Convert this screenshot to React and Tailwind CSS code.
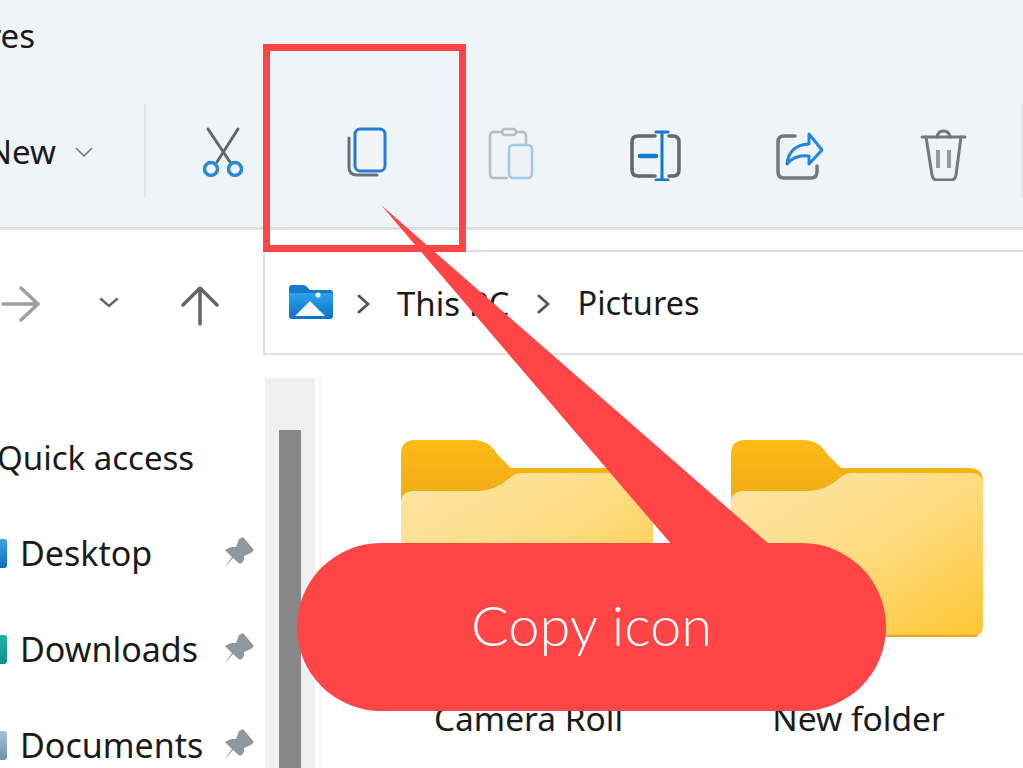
const Icon = ({ children }) => (
  <svg viewBox="0 0 56 56" fill="none" strokeLinecap="round" strokeLinejoin="round" className="w-[56px] h-[56px]">
    {children}
  </svg>
);

const ToolButton = ({ children }) => (
  <div className="w-[144px] flex items-center justify-center">
    <Icon>{children}</Icon>
  </div>
);

const PinIcon = () => (
  <svg viewBox="0 0 32 32" className="w-[32px] h-[32px]">
    <path d="M1 31 L9 20 L2 13 Q8 9 13 10 L16 2 L20 0 L31 13 L28 16 L21 19 Q22 24 17 27 L10 21 Z" fill="#8f98a0" />
  </svg>
);

const SidebarRow = ({ label, iconClass }) => (
  <div className="h-[96px] flex items-center">
    <div className={`w-[7px] h-[29px] rounded-r-[3px] ${iconClass}`} />
    <span className="ml-[13px] w-[203px] text-[34px] text-[#1a1a1a] leading-none">{label}</span>
    <PinIcon />
  </div>
);

const FolderIcon = ({ id }) => (
  <svg viewBox="0 0 252 197" className="w-[252px] h-[197px]">
    <defs>
      <linearGradient id={id} x1="0" y1="0" x2="1" y2="1">
        <stop offset="0" stopColor="#fde5a6" />
        <stop offset="0.5" stopColor="#fddc82" />
        <stop offset="1" stopColor="#fdc630" />
      </linearGradient>
      <linearGradient id={`${id}Tab`} x1="0" y1="0" x2="0" y2="1">
        <stop offset="0" stopColor="#fcbb18" />
        <stop offset="1" stopColor="#eda714" />
      </linearGradient>
    </defs>
    <path
      d="M0 70 V14 Q0 0 14 0 H72 Q88 0 96 14 L110 28 H238 Q252 28 252 42 V80 H0 Z"
      fill={`url(#${id}Tab)`}
    />
    <path
      d="M0 62 Q0 52 12 51 H78 Q94 51 110 37 Q114 33 122 33 H240 Q252 33 252 45 V185 Q252 197 240 197 H12 Q0 197 0 185 Z"
      fill={`url(#${id})`}
    />
    <path d="M6 196 H246" stroke="#eaa61c" strokeWidth="2.5" />
  </svg>
);

const FolderTile = ({ id, label }) => (
  <div className="w-[252px] flex flex-col items-center">
    <FolderIcon id={id} />
    <span className="mt-[60px] ml-[3px] text-[33.5px] leading-[42px] text-[#1a1a1a] whitespace-nowrap">{label}</span>
  </div>
);

export default function App() {
  return (
    <div className="relative w-[1023px] h-[768px] overflow-hidden bg-white font-['Noto_Sans',sans-serif]">
      {/* ribbon */}
      <div className="h-[230px] bg-[#eff4f9] border-b-[3px] border-[#dde1e5]">
        <div className="h-[71px] flex items-center">
          <span className="-ml-[89px] text-[33px] leading-none text-[#1a1a1a]">Pictures</span>
        </div>
        <div className="h-[156px] pt-[8px] flex items-center">
          <div className="w-[144px] flex items-center -mt-[3px]">
            <span className="-ml-[13px] text-[33px] leading-none text-[#1a1a1a]">New</span>
            <svg viewBox="0 0 18 10" fill="none" className="ml-[19px] w-[18px] h-[10px]">
              <path d="M1 1 L9 9 L17 1" stroke="#777" strokeWidth="1.6" />
            </svg>
          </div>
          <div className="w-[2px] h-[93px] bg-[#e1e5e9] mr-[5px] -mt-[5px]" />
          <ToolButton>
            <path d="M13 4 L35 37" stroke="#666" strokeWidth="3" />
            <path d="M43 4 L22 37" stroke="#666" strokeWidth="3" />
            <circle cx="16" cy="44" r="6.5" stroke="#2b88d8" strokeWidth="3.5" />
            <circle cx="40" cy="44" r="6.5" stroke="#2b88d8" strokeWidth="3.5" />
          </ToolButton>
          <ToolButton>
            <path d="M10 13 V42 Q10 50 18 50 H38" stroke="#6e6e6e" strokeWidth="3" />
            <rect x="16" y="4" width="30" height="42" rx="5" fill="#f3f4f7" stroke="#1f7fd6" strokeWidth="3" />
          </ToolButton>
          <ToolButton>
            <path d="M19 7 H11 Q7 7 7 11 V49 Q7 53 11 53 H24" stroke="#bcbcbc" strokeWidth="2.5" />
            <path d="M33 7 H39 Q43 7 43 11 V18" stroke="#bcbcbc" strokeWidth="2.5" />
            <rect x="19" y="4" width="14" height="6" rx="3" stroke="#bcbcbc" strokeWidth="2.5" />
            <rect x="26" y="20" width="23" height="33" rx="4" fill="#f0f1f5" stroke="#9cc8ee" strokeWidth="2.5" />
          </ToolButton>
          <ToolButton>
            <path d="M28 11 H11 Q5 11 5 17 V45 Q5 51 11 51 H28" stroke="#666" strokeWidth="3.5" />
            <path d="M42 11 H46 Q52 11 52 17 V45 Q52 51 46 51 H42" stroke="#666" strokeWidth="3.5" />
            <path d="M35 7 V55 M29 7 H41 M29 55 H41" stroke="#0f78d4" strokeWidth="3" />
            <path d="M13 31 H29" stroke="#0f78d4" strokeWidth="4.5" />
          </ToolButton>
          <ToolButton>
            <path d="M24 11 H13 Q7 11 7 17 V47 Q7 53 13 53 H40 Q46 53 46 47 V41" stroke="#777" strokeWidth="3.5" />
            <path d="M38 9 L51 25 L38 39 V31 Q24 29 16 39 Q18 20 38 19 Z" stroke="#1f87e0" strokeWidth="3" />
          </ToolButton>
          <ToolButton>
            <path d="M7 12 H50" stroke="#777" strokeWidth="3" />
            <path d="M22 12 Q23 6 28.5 6 Q34 6 35 12" stroke="#777" strokeWidth="3" />
            <path d="M11 12 L17 50 Q18 55 22 55 H36 Q40 55 41 50 L46 12" stroke="#777" strokeWidth="3" />
            <path d="M23 25 V43 M34 25 V43" stroke="#999" strokeWidth="4" strokeLinecap="butt" />
          </ToolButton>
          <div className="ml-[6px] w-[2px] h-[93px] bg-[#e1e5e9] -mt-[5px]" />
        </div>
      </div>

      {/* nav + address bar */}
      <div className="h-[148px] pt-[20px]">
        <div className="h-[105px] flex">
          <div className="w-[263px] flex items-center">
            <svg viewBox="0 0 40 36" fill="none" strokeLinecap="round" strokeLinejoin="round" className="w-[40px] h-[36px] mt-[2px]">
              <path d="M3 18 H38 M21 2 L38 18 L21 34" stroke="#9e9e9e" strokeWidth="3.5" />
            </svg>
            <svg viewBox="0 0 20 11" fill="none" strokeLinecap="round" className="ml-[59px] w-[20px] h-[11px]">
              <path d="M2 2 L10 9 L18 2" stroke="#666" strokeWidth="2.4" />
            </svg>
            <svg viewBox="0 0 40 40" fill="none" strokeLinecap="round" strokeLinejoin="round" className="ml-[61px] w-[40px] h-[40px] mt-[6px]">
              <path d="M20 38 V2 M3 19 L20 2 L37 19" stroke="#666" strokeWidth="3.5" />
            </svg>
          </div>
          <div className="flex-1 flex items-center border-y-2 border-l-2 border-[#e0e0e0] pl-[24px]">
            <svg viewBox="0 0 44 34" className="w-[44px] h-[34px] -mt-[2px]">
              <defs>
                <linearGradient id="picFolder" x1="0" y1="0" x2="0" y2="1">
                  <stop offset="0" stopColor="#2ba4ea" />
                  <stop offset="1" stopColor="#0c6fc9" />
                </linearGradient>
              </defs>
              <path d="M0 3 Q0 0 3 0 H14 Q17 0 19 3 L21 5 H41 Q44 5 44 8 V14 H0 Z" fill="#1878c9" />
              <path d="M0 8 H41 Q44 8 44 11 V31 Q44 34 41 34 H3 Q0 34 0 31 Z" fill="url(#picFolder)" />
              <path d="M6 31 L21 16 L36 31 Z" fill="#f4faff" />
              <circle cx="29" cy="10" r="2.6" fill="#e8f4ff" />
            </svg>
            <svg viewBox="0 0 14 20" fill="none" strokeLinecap="round" strokeLinejoin="round" className="ml-[24px] w-[14px] h-[20px] mt-[2px]">
              <path d="M2 2 L11 10 L2 18" stroke="#555" strokeWidth="3" />
            </svg>
            <span className="ml-[26px] text-[33px] leading-none text-[#1a1a1a] whitespace-nowrap mt-[2px]">This PC</span>
            <svg viewBox="0 0 14 20" fill="none" strokeLinecap="round" strokeLinejoin="round" className="ml-[28px] w-[14px] h-[20px] mt-[2px]">
              <path d="M2 2 L11 10 L2 18" stroke="#555" strokeWidth="3" />
            </svg>
            <span className="ml-[26px] text-[32.5px] leading-none text-[#1a1a1a] mt-[2px]">Pictures</span>
          </div>
        </div>
      </div>

      {/* sidebar, scrollbar, folders */}
      <div className="h-[390px] flex">
        <div className="w-[265px] pt-[31px] shrink-0">
          <div className="h-[96px] flex items-center">
            <span className="-ml-[3px] text-[33px] leading-none text-[#1a1a1a]">Quick access</span>
          </div>
          <SidebarRow label="Desktop" iconClass="bg-gradient-to-b from-[#3aa4e8] to-[#0f6cbd]" />
          <SidebarRow label="Downloads" iconClass="bg-gradient-to-b from-[#1fb5a8] to-[#0e8f8a]" />
          <SidebarRow label="Documents" iconClass="bg-gradient-to-b from-[#a9c0d4] to-[#6f93b3]" />
        </div>
        <div className="w-[50px] bg-[#f0f0f0] pl-[14px] pt-[52px] shrink-0">
          <div className="w-[22px] h-full bg-[#888888]" />
        </div>
        <div className="flex-1 border-l-[2px] ml-[4px] border-[#f5f5f5] pl-[80px] pt-[62px] flex gap-[78px]">
          <FolderTile id="folderOne" label="Camera Roll" />
          <FolderTile id="folderTwo" label="New folder" />
        </div>
      </div>

      {/* annotation overlay */}
      <div className="absolute left-[263px] top-[44px] w-[203px] h-[208px] border-[7px] border-[#ff4545]" />
      <svg viewBox="0 0 1023 768" className="absolute left-0 top-0 w-[1023px] h-[768px]">
        <polygon points="381,205 672,545 770,545" fill="#ff4545" />
      </svg>
      <div className="absolute left-[297px] top-[543px] w-[589px] h-[168px] rounded-[84px] bg-[#ff4545] flex items-center justify-center">
        <span className="font-['Lato',sans-serif] font-light text-[56px] leading-none text-white pb-[4px]">Copy icon</span>
      </div>
    </div>
  );
}
